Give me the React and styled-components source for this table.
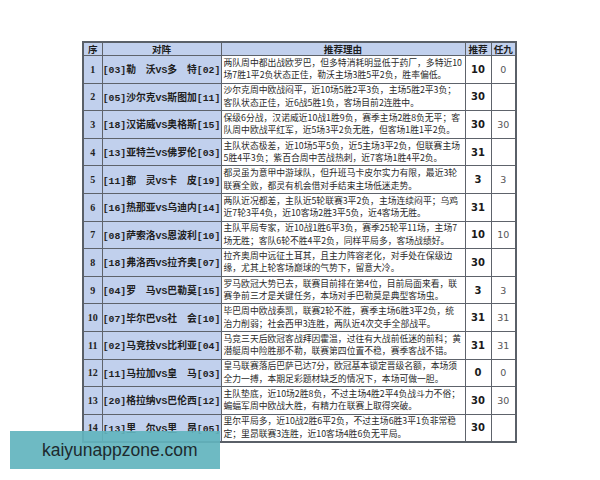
import React from 'react';
import styled, { createGlobalStyle } from 'styled-components';

const GlobalStyle = createGlobalStyle`
    html, body {
        margin: 0;
        padding: 0;
        background: #ffffff;
    }
`;

const Page = styled.div`
    position: relative;
    width: 600px;
    height: 480px;
    padding: 41px 0 0 82px;
    box-sizing: border-box;
    overflow: hidden;
    font-family: "Noto Sans CJK SC", sans-serif;
`;

const Table = styled.table`
    width: 433px;
    table-layout: fixed;
    border-collapse: collapse;
    border: 2px solid #5a6068;
    color: #222;
`;

const HeadCell = styled.th`
    height: 12px;
    padding: 0;
    background: #c1d0ed;
    border: 1px solid #5e636b;
    font-size: 9.6px;
    line-height: 12px;
    font-weight: 700;
    text-align: center;
    color: #1c1c1c;
`;

const BodyRow = styled.tr`
    height: 27.6px;
`;

const SeqCell = styled.td`
    padding: 0;
    background: #c1d0ed;
    border: 1px solid #5e636b;
    font-family: "Liberation Serif", serif;
    font-weight: 700;
    font-size: 10px;
    text-align: center;
`;

const MatchCell = styled.td`
    padding: 0;
    background: #c1d0ed;
    border: 1px solid #5e636b;
    font-family: "Liberation Mono", "Noto Sans CJK SC", monospace;
    font-weight: 700;
    font-size: 9.8px;
    text-align: center;
    white-space: nowrap;
    color: #1e1e1e;
`;

const ReasonCell = styled.td`
    padding: 0 2px;
    background: #ffffff;
    border: 1px solid #5e636b;
    font-size: 8.8px;
    line-height: 12.4px;
    text-align: left;
    color: #2a2a2a;
    white-space: pre;
    overflow: hidden;
`;

const PickCell = styled.td`
    padding: 0;
    background: #ffffff;
    border: 1px solid #5e636b;
    font-family: "DejaVu Sans", sans-serif;
    font-weight: 700;
    font-size: 10px;
    text-align: center;
    color: #1a1a1a;
`;

const NineCell = styled.td`
    padding: 0;
    background: #ffffff;
    border: 1px solid #5e636b;
    font-family: "DejaVu Sans", sans-serif;
    font-size: 9.5px;
    text-align: center;
    color: #555;
`;

const Watermark = styled.div`
    position: absolute;
    left: 10px;
    top: 431px;
    width: 210px;
    height: 38px;
    display: flex;
    align-items: center;
    padding-left: 32px;
    box-sizing: border-box;
    background: rgba(98, 180, 190, 0.92);
    font-family: "Liberation Sans", Arial, sans-serif;
    font-size: 17.5px;
    color: #1d2a2e;
`;

// reason text keeps the two-line break of the original table
const rows = [
    ['[03]勒　沃VS多　特[02]', '两队周中都出战欧罗巴，但多特消耗明显低于药厂，多特近10\n场7胜1平2负状态正佳，勒沃主场3胜5平2负，胜率偏低。', '10', '0'],
    ['[05]沙尔克VS斯图加[11]', '沙尔克周中欧战闷平，近10场5胜2平3负，主场5胜2平3负；\n客队状态正佳，近6战5胜1负，客场目前2连胜中。', '30', ''],
    ['[18]汉诺威VS奥格斯[15]', '保级6分战，汉诺威近10战1胜9负，赛季主场2胜8负无平；客\n队周中欧战平红军，近5场3平2负无胜，但客场1胜1平2负。', '30', '30'],
    ['[13]亚特兰VS佛罗伦[03]', '主队状态极差，近10场5平5负，近5主场3平2负，但联赛主场\n5胜4平3负；紫百合周中苦战热刺，近7客场1胜4平2负。', '31', ''],
    ['[11]都　灵VS卡　皮[19]', '都灵虽为意甲中游球队，但升班马卡皮尔实力有限，最近3轮\n联赛全败，都灵有机会借对手结束主场低迷走势。', '3', '3'],
    ['[16]热那亚VS乌迪内[14]', '两队近况都差，主队近5轮联赛3平2负，主场连续闷平；乌鸡\n近7轮3平4负，近10客场2胜3平5负，近4客场无胜。', '31', ''],
    ['[08]萨索洛VS恩波利[10]', '主队平局专家，近10战1胜6平3负，赛季25轮平11场，主场7\n场无胜；客队6轮不胜4平2负，同样平局多，客场战绩好。', '10', '10'],
    ['[18]弗洛西VS拉齐奥[07]', '拉齐奥周中远征土耳其，且主力阵容老化，对手处在保级边\n缘，尤其上轮客场巅球的气势下，留意大冷。', '30', ''],
    ['[04]罗　马VS巴勒莫[15]', '罗马欧冠大势已去，联赛目前排在第4位，目前局面来看，联\n赛争前三才是关键任务，本场对手巴勒莫是典型客场虫。', '3', '3'],
    ['[07]毕尔巴VS社　会[10]', '毕巴周中欧战奏凯，联赛2轮不胜，赛季主场6胜3平2负，统\n治力削弱；社会西甲3连胜，两队近4次交手全部战平。', '31', '31'],
    ['[02]马竞技VS比利亚[04]', '马竞三天后欧冠客战拜因霍温，过往有大战前低迷的前科；黄\n潜艇周中险胜那不勒，联赛第四位置不稳，赛季客战不错。', '31', '31'],
    ['[11]马拉加VS皇　马[03]', '皇马联赛落后巴萨已达7分，欧冠基本锁定晋级名额，本场须\n全力一搏，本期足彩题材缺乏的情况下，本场可做一胆。', '0', '0'],
    ['[20]格拉纳VS巴伦西[12]', '主队垫底，近10场2胜8负，不过主场4胜2平4负战斗力不俗；\n蝙蝠军周中欧战大胜，有精力在联赛上取得突破。', '30', '30'],
    ['[13]里　尔VS里　昂[05]', '里尔平局多，近10战2胜6平2负，不过主场6胜3平1负非常稳\n定；里昂联赛3连胜，近10客场4胜6负无平局。', '30', ''],
];

export default function App() {
    return (
        <Page>
            <GlobalStyle />
            <Table>
                <colgroup>
                    <col style={{ width: 19 }} />
                    <col style={{ width: 119 }} />
                    <col style={{ width: 244 }} />
                    <col style={{ width: 26 }} />
                    <col style={{ width: 25 }} />
                </colgroup>
                <thead>
                    <tr>
                        <HeadCell>序</HeadCell>
                        <HeadCell>对阵</HeadCell>
                        <HeadCell>推荐理由</HeadCell>
                        <HeadCell>推荐</HeadCell>
                        <HeadCell>任九</HeadCell>
                    </tr>
                </thead>
                <tbody>
                    {rows.map(([match, reason, pick, nine], i) => (
                        <BodyRow key={i}>
                            <SeqCell>{i + 1}</SeqCell>
                            <MatchCell>{match}</MatchCell>
                            <ReasonCell>{reason}</ReasonCell>
                            <PickCell>{pick}</PickCell>
                            <NineCell>{nine}</NineCell>
                        </BodyRow>
                    ))}
                </tbody>
            </Table>
            <Watermark>kaiyunappzone.com</Watermark>
        </Page>
    );
}
